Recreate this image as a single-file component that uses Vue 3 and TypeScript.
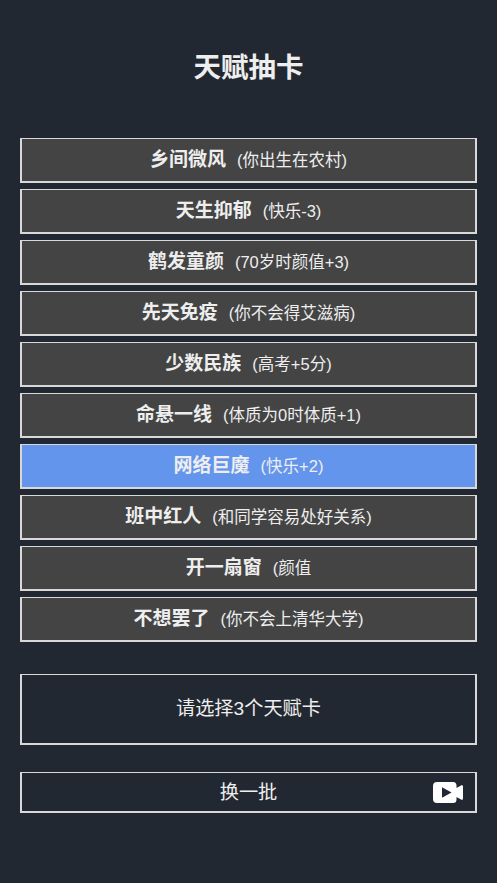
<script setup lang="ts">
interface Talent { name: string; desc: string; active?: boolean }
const talents: Talent[] = [
  { name: '乡间微风', desc: '(你出生在农村)' },
  { name: '天生抑郁', desc: '(快乐-3)' },
  { name: '鹤发童颜', desc: '(70岁时颜值+3)' },
  { name: '先天免疫', desc: '(你不会得艾滋病)' },
  { name: '少数民族', desc: '(高考+5分)' },
  { name: '命悬一线', desc: '(体质为0时体质+1)' },
  { name: '网络巨魔', desc: '(快乐+2)', active: true },
  { name: '班中红人', desc: '(和同学容易处好关系)' },
  { name: '开一扇窗', desc: '(颜值' },
  { name: '不想罢了', desc: '(你不会上清华大学)' },
]
</script>

<template>
  <main class="page">
    <h1 class="title">天赋抽卡</h1>
    <ul class="list">
      <li v-for="t in talents" :key="t.name" class="row" :class="{ active: t.active }">
        <span class="name">{{ t.name }}</span>
        <span class="desc">{{ t.desc }}</span>
      </li>
    </ul>
    <div class="hint">请选择3个天赋卡</div>
    <button class="refresh" type="button">
      换一批
      <svg class="icon" viewBox="0 0 30 21" aria-hidden="true">
        <path fill-rule="evenodd" fill="#fff" d="M4 0H20a3.5 3.5 0 0 1 3.5 3.5V6L28 3.4C29 2.8 30 3.3 30 4.4V16.6C30 17.7 29 18.2 28 17.6L23.5 15V17.5A3.5 3.5 0 0 1 20 21H4a4 4 0 0 1-4-4V4a4 4 0 0 1 4-4ZM9 5.2V15.8L18.5 10.5Z" />
      </svg>
    </button>
  </main>
</template>

<style>
html, body { margin: 0; background: #222831; }
</style>

<style scoped>
.page {
  box-sizing: border-box;
  height: 883px;
  padding: 50px 20px 0;
  background: #222831;
  color: #eeeeee;
  font-family: "Liberation Sans", "Noto Sans CJK SC", sans-serif;
}
.title {
  margin: 0;
  height: 36px;
  line-height: 36px;
  font-size: 27.5px;
  font-weight: 700;
  text-align: center;
}
.list {
  list-style: none;
  margin: 52px 0 0;
  padding: 0;
  display: flex;
  flex-direction: column;
  gap: 6px;
}
.row {
  box-sizing: border-box;
  height: 45px;
  padding-bottom: 5px;
  display: flex;
  align-items: center;
  justify-content: center;
  gap: 11px;
  background: #444444;
  border: 2px solid #d8d8d8;
  border-top-width: 1px;
}
.row.active { background: #6495ed; }
.name { font-size: 19px; font-weight: 700; }
.desc { font-size: 16.5px; margin-top: 3px; }
.hint {
  box-sizing: border-box;
  height: 71px;
  margin-top: 32px;
  padding-bottom: 5px;
  display: flex;
  align-items: center;
  justify-content: center;
  border: 2px solid #d8d8d8;
  border-top-width: 1px;
  font-size: 19.2px;
}
.refresh {
  position: relative;
  box-sizing: border-box;
  display: flex;
  align-items: center;
  justify-content: center;
  width: 100%;
  height: 41px;
  margin-top: 27px;
  padding: 0 0 3px;
  background: transparent;
  border: 2px solid #d8d8d8;
  border-top-width: 1px;
  color: inherit;
  font: inherit;
  font-size: 19.2px;
}
.icon {
  position: absolute;
  right: 12px;
  top: 9px;
  width: 30px;
  height: 21px;
}
</style>
